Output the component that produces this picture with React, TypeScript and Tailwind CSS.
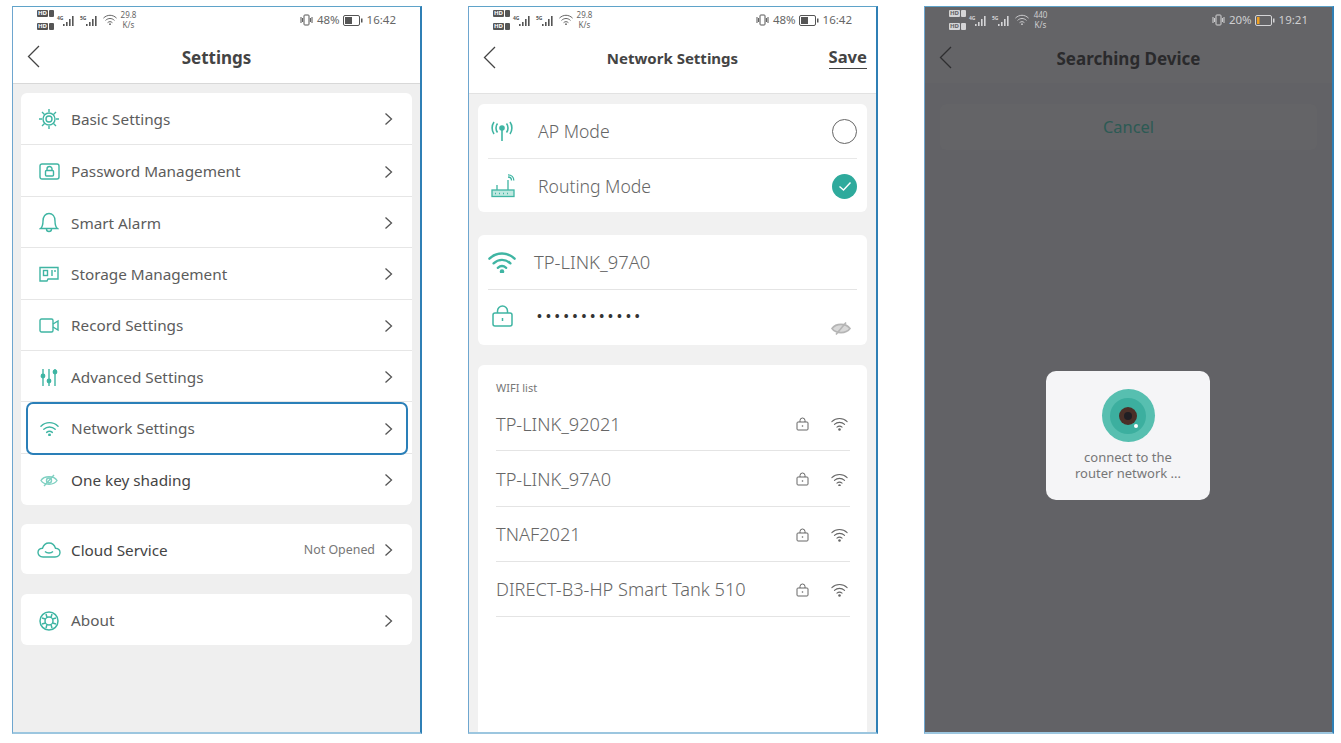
import React from "react";

const TEAL = "#3fb5a3";

function Chevron() {
  return (
    <svg width="9" height="14" viewBox="0 0 9 14" fill="none" stroke="#555" strokeWidth="1.3" className="shrink-0">
      <path d="M1.5 1.5 L7.5 7 L1.5 12.5" />
    </svg>
  );
}

function Back({ color = "#444" }: { color?: string }) {
  return (
    <svg width="13" height="23" viewBox="0 0 13 23" fill="none" stroke={color} strokeWidth="1.3">
      <path d="M12 1 L1.5 11.5 L12 22" />
    </svg>
  );
}

function Signal({ label, color }: { label: string; color: string }) {
  return (
    <span className="flex items-start">
      <span className="text-[5px] leading-[7px] mt-[1px] font-bold w-[6px]" style={{ color }}>{label}</span>
      <svg width="12" height="12" viewBox="0 0 12 12" fill={color} className="mt-[1px]">
        <rect x="0" y="9" width="1.6" height="2" />
        <rect x="3" y="7" width="1.6" height="4" />
        <rect x="6" y="4" width="1.6" height="7" />
        <rect x="9" y="1" width="1.6" height="10" />
      </svg>
    </span>
  );
}

function Wifi({ size = 14, color, width = 1.3, dot = 1.2 }: { size?: number; color: string; width?: number; dot?: number }) {
  return (
    <svg width={size} height={size * 0.8} viewBox="0 0 20 16" fill="none" stroke={color} strokeWidth={width} strokeLinecap="round">
      <path d="M1 5.5 C6 0.5 14 0.5 19 5.5" />
      <path d="M4 8.8 C7.5 5.5 12.5 5.5 16 8.8" />
      <path d="M7 12 C8.8 10.5 11.2 10.5 13 12" />
      <circle cx="10" cy="14.6" r={dot} fill={color} stroke="none" />
    </svg>
  );
}

function Hd({ color, ink }: { color: string; ink: string }) {
  return (
    <span className="flex items-center gap-[1px]">
      <span className="text-[6px] leading-[7px] font-bold rounded-[1px] px-[1px] h-[7px] w-[11px] flex items-center justify-center" style={{ backgroundColor: color, color: ink }}>HD</span>
      <span className="w-[5px] h-[7px] rounded-[1px]" style={{ backgroundColor: color }} />
    </span>
  );
}

function StatusBar({ speed, unit, pct, time, dark, low }: { speed: string; unit: string; pct: string; time: string; dark?: boolean; low?: boolean }) {
  const c = dark ? "#d4d4d6" : "#555555";
  const tc = dark ? "#cfcfd1" : "#666666";
  const ink = dark ? "#606064" : "#ffffff";
  return (
    <div className="h-[26px] flex items-center justify-between pl-[24px] pr-[24px] shrink-0">
      <div className="flex items-center gap-[2px]">
        <div className="flex flex-col gap-[6px] mr-[1px]">
          <Hd color={c} ink={ink} />
          <Hd color={c} ink={ink} />
        </div>
        <Signal label="4G" color={c} />
        <span className="w-[1px]" />
        <Signal label="5G" color={c} />
        <span className="w-[1px]" />
        <Wifi size={14} color={c} />
        <div className="text-[8px] leading-[10px] text-center w-[17px] ml-[1px]" style={{ color: tc }}>
          <div>{speed}</div>
          <div>{unit}</div>
        </div>
      </div>
      <div className="flex items-center text-[11.5px]" style={{ color: tc }}>
        <svg width="13" height="12" viewBox="0 0 13 12" fill="none" stroke={c} strokeWidth="1" className="mr-[4px]">
          <rect x="4" y="1" width="5" height="10" rx="0.8" />
          <path d="M1 3 V9 M2.6 4 V8 M10.4 4 V8 M12 3 V9" />
        </svg>
        <span>{pct}</span>
        <svg width="20" height="11" viewBox="0 0 20 11" fill="none" className="mx-[3px]">
          <rect x="0.5" y="0.5" width="16" height="10" rx="1.5" stroke={c} />
          <rect x="2" y="2" width={low ? 2.5 : 7} height="7" fill={low ? "#f0a020" : c} />
          <rect x="18" y="3.5" width="1.5" height="4" fill={c} />
        </svg>
        <span className="ml-[1px]">{time}</span>
      </div>
    </div>
  );
}

function Phone({ children, bg }: { children: React.ReactNode; bg: string }) {
  return (
    <div
      className="relative w-[410px] h-[728px] flex flex-col overflow-hidden border-l border-r-2 border-t border-b-2 border-l-[#6ea6cf] border-r-[#2f7fb5] border-t-[#5fa3c9] border-b-[#9cc6df]"
      style={{ backgroundColor: bg }}
    >
      {children}
    </div>
  );
}

const ico = { fill: "none", stroke: TEAL, strokeWidth: 1.4 } as const;

const icons: Record<string, React.ReactNode> = {
  gear: (
    <svg width="22" height="22" viewBox="0 0 22 22" {...ico}>
      <circle cx="11" cy="11" r="6" />
      <circle cx="11" cy="11" r="3" />
      <path d="M11 1 V4 M11 18 V21 M1 11 H4 M18 11 H21 M4 4 L6.5 6.5 M18 4 L15.5 6.5 M4 18 L6.5 15.5 M18 18 L15.5 15.5" />
    </svg>
  ),
  pass: (
    <svg width="21" height="17" viewBox="0 0 21 17" {...ico}>
      <rect x="1" y="1" width="19" height="15" rx="2" />
      <rect x="6.5" y="7.5" width="8" height="5.5" rx="1" />
      <path d="M8 7.5 V6 a2.5 2.5 0 0 1 5 0 V7.5" />
    </svg>
  ),
  bell: (
    <svg width="20" height="21" viewBox="0 0 20 21" {...ico}>
      <path d="M1.5 16.5 C3.5 15 4 13 4 9 C4 4.5 6.5 1.5 10 1.5 C13.5 1.5 16 4.5 16 9 C16 13 16.5 15 18.5 16.5 Z" />
      <path d="M7.5 17 a2.5 2.5 0 0 0 5 0" />
    </svg>
  ),
  storage: (
    <svg width="20" height="16" viewBox="0 0 20 16" {...ico}>
      <path d="M1 1.5 H19 V13 H9 L8 15 H1 Z" />
      <rect x="4.5" y="4.5" width="4" height="5" />
      <path d="M13 4 V10 M16 4 V6" />
    </svg>
  ),
  record: (
    <svg width="20" height="15" viewBox="0 0 20 15" {...ico}>
      <rect x="1" y="1" width="13" height="13" rx="1.5" />
      <path d="M14 6 L19 3 V12 L14 9" />
    </svg>
  ),
  adv: (
    <svg width="18" height="19" viewBox="0 0 18 19" fill={TEAL} stroke={TEAL} strokeWidth="1.4">
      <path d="M3 1 V18 M9 1 V18 M15 1 V18" />
      <circle cx="3" cy="8" r="1.7" />
      <circle cx="9" cy="13" r="1.7" />
      <circle cx="15" cy="4" r="1.7" />
    </svg>
  ),
  wifi: <Wifi size={19} color={TEAL} width={1.5} dot={1.5} />,
  eye: (
    <svg width="18" height="13" viewBox="0 0 18 13" {...ico} stroke="#7fd0c2">
      <path d="M1 6.5 C4 1.5 14 1.5 17 6.5 C14 11.5 4 11.5 1 6.5 Z" />
      <circle cx="9" cy="6.5" r="2.5" />
      <path d="M14 1 L4 12" />
    </svg>
  ),
  cloud: (
    <svg width="24" height="16" viewBox="0 0 24 16" {...ico}>
      <path d="M6 15 C2.5 15 1 12.5 1 10.5 C1 8 3 6.5 5.5 6.3 C6.5 3 9 1 12 1 C15 1 17.5 3 18.5 6.3 C21 6.5 23 8 23 10.5 C23 12.5 21.5 15 18 15 Z" />
      <path d="M8 9.5 C10 11.5 14 11.5 16 9.5" />
    </svg>
  ),
  about: (
    <svg width="20" height="20" viewBox="0 0 20 20" {...ico} strokeWidth={1.5}>
      <circle cx="10" cy="10" r="9" />
      <circle cx="10" cy="10" r="4" />
      <path d="M7 3 L8 6.5 M13 3 L12 6.5 M7 17 L8 13.5 M13 17 L12 13.5 M3 7 L6.5 8 M3 13 L6.5 12 M17 7 L13.5 8 M17 13 L13.5 12" />
    </svg>
  ),
};

function Row({ icon, label, last, value, dark, selected, h = "h-[51.4px]" }: { icon: string; label: string; last?: boolean; value?: string; dark?: boolean; selected?: boolean; h?: string }) {
  return (
    <div className={`relative flex items-center ${h} pt-[2px] first:pt-0 pr-[19px] ${last ? "" : "border-b border-[#e6e6e6]"}`}>
      <div className="w-[50px] pl-[6px] flex justify-center shrink-0">{icons[icon]}</div>
      <span className={`text-[15.3px] ${dark ? "text-[#444444]" : "text-[#5c5c5c]"}`}>{label}</span>
      <span className="ml-auto mr-[9px] text-[12.4px] text-[#777777]">{value}</span>
      <Chevron />
      {selected && <div className="absolute left-[5px] right-[4px] top-0 bottom-[-2px] border-2 border-[#2a7fb8] rounded-[7px]" />}
    </div>
  );
}

function Card({ children, className = "" }: { children: React.ReactNode; className?: string }) {
  return <div className={`bg-white rounded-[6px] ${className}`}>{children}</div>;
}

function SettingsPhone() {
  return (
    <Phone bg="#efefef">
      <div className="bg-white h-[77px] border-b border-[#d8d8d8] shrink-0 flex flex-col">
        <StatusBar speed="29.8" unit="K/s" pct="48%" time="16:42" />
        <div className="relative flex-1 flex items-center justify-center pb-[1px]">
          <span className="absolute left-[14px] top-[12px]"><Back /></span>
          <span className="text-[17px] font-bold text-[#444444]">Settings</span>
        </div>
      </div>
      <div className="px-[8px] pt-[9px] flex flex-col">
        <Card className="pt-[1px]">
          <Row icon="gear" label="Basic Settings" />
          <Row icon="pass" label="Password Management" />
          <Row icon="bell" label="Smart Alarm" />
          <Row icon="storage" label="Storage Management" />
          <Row icon="record" label="Record Settings" />
          <Row icon="adv" label="Advanced Settings" />
          <Row icon="wifi" label="Network Settings" selected />
          <Row icon="eye" label="One key shading" dark last />
        </Card>
        <Card className="mt-[19px] pt-[2px]">
          <Row icon="cloud" label="Cloud Service" value="Not Opened" dark last h="h-[48px]" />
        </Card>
        <Card className="mt-[20px] pt-[2px]">
          <Row icon="about" label="About" last h="h-[49px]" />
        </Card>
      </div>
    </Phone>
  );
}

function WifiRow({ name }: { name: string }) {
  return (
    <div className="h-[55.3px] flex items-center border-b border-[#e4e4e4] pr-[2px] pt-[2px]">
      <span className="text-[18.2px] text-[#666666] font-light">{name}</span>
      <span className="ml-auto mr-[22px]">
        <svg width="13" height="14" viewBox="0 0 13 14" fill="none" stroke="#666" strokeWidth="1">
          <rect x="1" y="5" width="11" height="8" rx="1" />
          <path d="M4 5 V3.5 a2.5 2.5 0 0 1 5 0 V5" />
          <circle cx="6.5" cy="9" r="0.8" fill="#666" stroke="none" />
        </svg>
      </span>
      <Wifi size={17} color="#666666" width={1.2} dot={1.5} />
    </div>
  );
}

function NetworkPhone() {
  return (
    <Phone bg="#f1f1f1">
      <div className="bg-white h-[87px] border-b border-[#e2e2e2] shrink-0 flex flex-col">
        <StatusBar speed="29.8" unit="K/s" pct="48%" time="16:42" />
        <div className="relative flex-1 flex items-start justify-center pt-[14px]">
          <span className="absolute left-[14px] top-[13px]"><Back /></span>
          <span className="text-[15px] font-bold text-[#444444]">Network Settings</span>
          <span className="absolute right-[9px] top-[13px] text-[16.6px] font-bold text-[#444444] border-b border-[#444444] leading-[22px]">Save</span>
        </div>
      </div>
      <div className="px-[9px] pt-[10px] flex flex-col flex-1">
        <Card className="h-[108px] px-[10px] flex flex-col">
          <div className="h-[55px] flex items-center border-b border-[#e8e8e8]">
            <span className="w-[50px] flex">
              <svg width="22" height="21" viewBox="0 0 22 21" fill="none" stroke={TEAL} strokeWidth="1.6" className="ml-[3px]">
                <circle cx="11" cy="7" r="2" fill={TEAL} />
                <path d="M11 8 V20" />
                <path d="M6.5 2.5 C4.5 5 4.5 9 6.5 11.5 M15.5 2.5 C17.5 5 17.5 9 15.5 11.5 M3 1 C0.5 4.5 0.5 9.5 3 13 M19 1 C21.5 4.5 21.5 9.5 19 13" />
              </svg>
            </span>
            <span className="text-[17.6px] text-[#666666] font-light">AP Mode</span>
            <span className="ml-auto w-[25px] h-[25px] rounded-full border border-[#666666]" />
          </div>
          <div className="flex-1 flex items-center pt-[2px]">
            <span className="w-[50px] flex">
              <svg width="25" height="24" viewBox="0 0 25 24" fill="none" stroke={TEAL} strokeWidth="1.3" className="ml-[3px] mt-[-2px]">
                <rect x="1" y="16" width="22" height="6.5" fill="#bfe8e0" />
                <path d="M4 19.5 H6 M8 19.5 H10 M12 19.5 H14 M16 19.5 H18" strokeDasharray="1 1" />
                <path d="M6 16 V11 M17 16 V6" />
                <path d="M17 3 C19 3 20.5 4.5 20.5 6.5 M17 0.8 C20.5 0.8 22.8 3.2 22.8 6.5" />
              </svg>
            </span>
            <span className="text-[17.6px] text-[#666666] font-light">Routing Mode</span>
            <span className="ml-auto w-[25px] h-[25px] rounded-full bg-[#2eaa9c] flex items-center justify-center">
              <svg width="14" height="11" viewBox="0 0 14 11" fill="none" stroke="#ffffff" strokeWidth="1.4">
                <path d="M1.5 5.5 L5.5 9 L12.5 1.5" />
              </svg>
            </span>
          </div>
        </Card>
        <Card className="mt-[23px] h-[110px] px-[10px] flex flex-col">
          <div className="h-[55px] flex items-center border-b border-[#e4e4e4]">
            <span className="w-[46px] flex">
              <Wifi size={28} color={TEAL} width={1.7} dot={1.6} />
            </span>
            <span className="text-[18.4px] text-[#666666] font-light">TP-LINK_97A0</span>
          </div>
          <div className="relative flex-1 flex items-start pt-[15px]">
            <span className="w-[49px] flex pl-[4px]">
              <svg width="21" height="22" viewBox="0 0 21 22" fill="none" stroke={TEAL} strokeWidth="1.5">
                <rect x="1" y="8" width="19" height="13" rx="2" />
                <path d="M5.5 8 V6 a5 5 0 0 1 10 0 V8" />
                <path d="M10.5 13 V16" />
              </svg>
            </span>
            <span className="text-[13px] leading-[22px] tracking-[4px] text-[#333333] font-bold">••••••••••••</span>
            <span className="absolute right-[6px] bottom-[10px]">
              <svg width="20" height="13" viewBox="0 0 20 13" fill="none" stroke="#b5b5b5" strokeWidth="1.6">
                <path d="M1 6.5 C5 1 15 1 19 6.5 C15 12 5 12 1 6.5 Z" fill="#d8d8d8" />
                <path d="M15 0.5 L5 12.5" />
              </svg>
            </span>
          </div>
        </Card>
        <Card className="mt-[20px] flex-1 pl-[18px] pr-[17px] pt-[15px] rounded-b-none">
          <div className="text-[11px] leading-[16px] text-[#777777] h-[16px]">WIFI list</div>
          <div>
            <WifiRow name="TP-LINK_92021" />
            <WifiRow name="TP-LINK_97A0" />
            <WifiRow name="TNAF2021" />
            <WifiRow name="DIRECT-B3-HP Smart Tank 510" />
          </div>
        </Card>
      </div>
    </Phone>
  );
}

function SearchPhone() {
  return (
    <Phone bg="#626266">
      <div className="h-[76px] shrink-0 flex flex-col bg-[#646467]">
        <StatusBar speed="440" unit="K/s" pct="20%" time="19:21" dark low />
        <div className="relative flex-1 flex items-start justify-center pt-[13px]">
          <span className="absolute left-[14px] top-[13px]"><Back color="#2e2e30" /></span>
          <span className="text-[17px] font-bold text-[#2a2a2c]">Searching Device</span>
        </div>
      </div>
      <div className="px-[15px] pt-[21px]">
        <div className="h-[46px] bg-[#646467] rounded-[6px] flex items-center justify-center">
          <span className="text-[16.4px] text-[#2c5a54]">Cancel</span>
        </div>
      </div>
      <div className="absolute left-[121px] top-[364px] w-[164px] h-[129px] rounded-[10px] bg-[#f5f5f7] flex flex-col items-center pt-[18px]">
        <div className="w-[53px] h-[53px] rounded-full bg-[#57bfb0] flex items-center justify-center relative">
          <div className="w-[36px] h-[36px] rounded-full bg-[#3caf9f] flex items-center justify-center">
            <div className="w-[18px] h-[18px] rounded-full bg-[#4a3028] flex items-center justify-center">
              <div className="w-[8px] h-[8px] rounded-full bg-[#1f1f24]" />
            </div>
          </div>
          <div className="absolute left-[32px] top-[35px] w-[4px] h-[4px] rounded-full bg-white" />
        </div>
        <div className="mt-[7px] text-[13px] leading-[16px] text-[#777777] text-center">
          connect to the
          <br />
          router network ...
        </div>
      </div>
    </Phone>
  );
}

export default function App() {
  return (
    <div className="w-[1341px] h-[743px] bg-white overflow-hidden pl-[12px] pt-[6px] flex gap-[46px] font-['Noto_Sans',sans-serif]">
      <SettingsPhone />
      <NetworkPhone />
      <SearchPhone />
    </div>
  );
}
